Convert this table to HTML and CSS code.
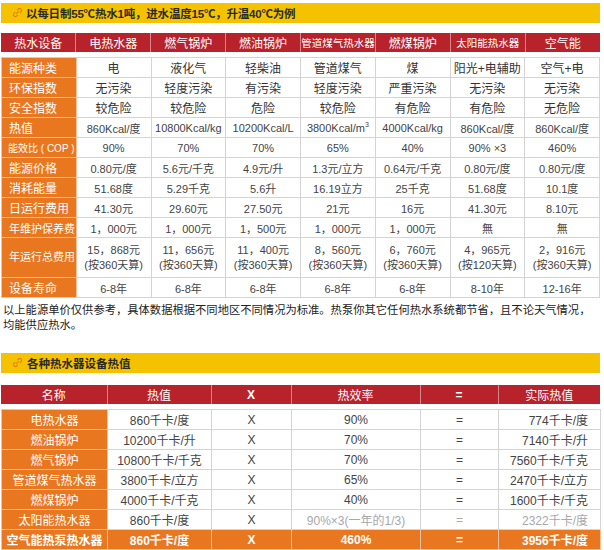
FILE: index.html
```html
<!DOCTYPE html>
<html lang="zh">
<head>
<meta charset="utf-8">
<title>热水设备对比</title>
<link rel="stylesheet" href="styles.css">
</head>
<body>
<div class="page">
  <div class="banner">
    <svg class="link" width="9" height="9" viewBox="0 0 9 9"><path d="M4.2 2.2 L5.6 0.8 Q6.6 -0.2 7.6 0.8 L8.2 1.4 Q9.2 2.4 8.2 3.4 L6.8 4.8 M4.8 6.8 L3.4 8.2 Q2.4 9.2 1.4 8.2 L0.8 7.6 Q-0.2 6.6 0.8 5.6 L2.2 4.2 M3.2 5.8 L5.8 3.2" fill="none" stroke="#e8761e" stroke-width="1.1"/></svg>
    <span>以每日制55℃热水1吨，进水温度15℃，升温40℃为例</span>
  </div>

  <table class="t1 head">
    <tr>
      <th>热水设备</th><th>电热水器</th><th>燃气锅炉</th><th>燃油锅炉</th><th class="narrow">管道煤气热水器</th><th>燃煤锅炉</th><th class="narrow">太阳能热水器</th><th>空气能</th>
    </tr>
  </table>

  <table class="t1 body">
    <tr><td class="lab">能源种类</td><td class="cn">电</td><td class="cn">液化气</td><td class="cn">轻柴油</td><td class="cn">管道煤气</td><td class="cn">煤</td><td class="cn">阳光+电辅助</td><td class="cn">空气+电</td></tr>
    <tr><td class="lab">环保指数</td><td class="cn">无污染</td><td class="cn">轻度污染</td><td class="cn">有污染</td><td class="cn">轻度污染</td><td class="cn">严重污染</td><td class="cn">无污染</td><td class="cn">无污染</td></tr>
    <tr><td class="lab">安全指数</td><td class="cn">较危险</td><td class="cn">较危险</td><td class="cn">危险</td><td class="cn">较危险</td><td class="cn">有危险</td><td class="cn">有危险</td><td class="cn">无危险</td></tr>
    <tr><td class="lab">热值</td><td>860Kcal/度</td><td>10800Kcal/kg</td><td>10200Kcal/L</td><td>3800Kcal/m<sup>3</sup></td><td>4000Kcal/kg</td><td>860Kcal/度</td><td>860Kcal/度</td></tr>
    <tr><td class="lab lab-sm">能效比 ( COP )</td><td>90%</td><td>70%</td><td>70%</td><td>65%</td><td>40%</td><td>90% ×3</td><td>460%</td></tr>
    <tr><td class="lab">能源价格</td><td>0.80元/度</td><td>5.6元/千克</td><td>4.9元/升</td><td>1.3元/立方</td><td>0.64元/千克</td><td>0.80元/度</td><td>0.80元/度</td></tr>
    <tr><td class="lab">消耗能量</td><td>51.68度</td><td>5.29千克</td><td>5.6升</td><td>16.19立方</td><td>25千克</td><td>51.68度</td><td>10.1度</td></tr>
    <tr><td class="lab">日运行费用</td><td>41.30元</td><td>29.60元</td><td>27.50元</td><td>21元</td><td>16元</td><td>41.30元</td><td>8.10元</td></tr>
    <tr><td class="lab lab-6">年维护保养费</td><td>1，000元</td><td>1，000元</td><td>1，500元</td><td>1，000元</td><td>1，000元</td><td>無</td><td>無</td></tr>
    <tr class="tall"><td class="lab lab-6">年运行总费用</td><td>15，868元<br>(按360天算)</td><td>11，656元<br>(按360天算)</td><td>11，400元<br>(按360天算)</td><td>8，560元<br>(按360天算)</td><td>6，760元<br>(按360天算)</td><td>4，965元<br>(按120天算)</td><td>2，916元<br>(按360天算)</td></tr>
    <tr><td class="lab">设备寿命</td><td>6-8年</td><td>6-8年</td><td>6-8年</td><td>6-8年</td><td>6-8年</td><td>8-10年</td><td>12-16年</td></tr>
  </table>

  <p class="note">以上能源单价仅供参考，具体数据根据不同地区不同情况为标准。热泵你其它任何热水系统都节省，且不论天气情况，均能供应热水。</p>

  <div class="banner banner2">
    <svg class="link" width="9" height="9" viewBox="0 0 9 9"><path d="M4.2 2.2 L5.6 0.8 Q6.6 -0.2 7.6 0.8 L8.2 1.4 Q9.2 2.4 8.2 3.4 L6.8 4.8 M4.8 6.8 L3.4 8.2 Q2.4 9.2 1.4 8.2 L0.8 7.6 Q-0.2 6.6 0.8 5.6 L2.2 4.2 M3.2 5.8 L5.8 3.2" fill="none" stroke="#e8761e" stroke-width="1.1"/></svg>
    <span>各种热水器设备热值</span>
  </div>

  <table class="t2 head">
    <colgroup><col class="c1"><col class="c2"><col class="c3"><col class="c4"><col class="c5"><col class="c6"></colgroup>
    <tr><th>名称</th><th>热值</th><th class="b">X</th><th>热效率</th><th class="b">=</th><th>实际热值</th></tr>
  </table>

  <table class="t2 body">
    <colgroup><col class="c1"><col class="c2"><col class="c3"><col class="c4"><col class="c5"><col class="c6"></colgroup>
    <tr><td class="lab">电热水器</td><td>860千卡/度</td><td>X</td><td>90%</td><td>=</td><td class="r">774千卡/度</td></tr>
    <tr><td class="lab">燃油锅炉</td><td>10200千卡/升</td><td>X</td><td>70%</td><td>=</td><td class="r">7140千卡/升</td></tr>
    <tr><td class="lab">燃气锅炉</td><td>10800千卡/千克</td><td>X</td><td>70%</td><td>=</td><td class="r">7560千卡/千克</td></tr>
    <tr><td class="lab">管道煤气热水器</td><td>3800千卡/立方</td><td>X</td><td>65%</td><td>=</td><td class="r">2470千卡/立方</td></tr>
    <tr><td class="lab">燃煤锅炉</td><td>4000千卡/千克</td><td>X</td><td>40%</td><td>=</td><td class="r">1600千卡/千克</td></tr>
    <tr><td class="lab">太阳能热水器</td><td>860千卡/度</td><td>X</td><td class="fd">90%×3(一年的1/3)</td><td class="fd">=</td><td class="r fd">2322千卡/度</td></tr>
    <tr class="hl"><td class="lab">空气能热泵热水器</td><td>860千卡/度</td><td>X</td><td>460%</td><td>=</td><td class="r">3956千卡/度</td></tr>
  </table>
</div>
</body>
</html>
```

FILE: styles.css
```css
html, body {
  margin: 0;
  padding: 0;
  background: #ffffff;
}

.page {
  width: 599px;
  margin-left: 1px;
  padding-top: 3px;
  font-family: "Liberation Sans", "Noto Sans CJK SC", sans-serif;
  color: #3a3a3a;
}

.banner {
  height: 20px;
  background: #f5c200;
  display: flex;
  align-items: center;
  padding-left: 12px;
  gap: 4px;
  font-size: 11.5px;
  font-weight: bold;
  color: #2a2a2a;
  letter-spacing: -0.2px;
}

.banner .link {
  flex: none;
  margin-top: -2px;
}

.banner2 {
  margin-top: 20px;
  gap: 5px;
  letter-spacing: 0;
}

table {
  width: 599px;
  border-collapse: collapse;
  table-layout: fixed;
}

th {
  background: #b8232b;
  color: #ffffff;
  font-weight: normal;
  font-size: 12px;
  height: 19px;
  padding: 0;
  border-left: 1px solid #d9868a;
  text-align: center;
}

th:first-child {
  border-left: none;
}

th.narrow {
  font-size: 10.5px;
}

th.b {
  font-weight: bold;
}

.t1.head {
  margin-top: 10px;
}

.t1.body {
  margin-top: 5px;
}

td {
  padding: 0;
  height: 19px;
  border: 1px solid #d4d4d4;
  text-align: center;
  font-size: 11px;
  color: #444444;
  white-space: nowrap;
  overflow: hidden;
}

td.cn {
  font-size: 12px;
  color: #333333;
}

td sup {
  font-size: 7px;
  line-height: 0;
}

td.lab {
  background: #e9771f;
  color: #ffffff;
  text-align: left;
  padding-left: 7px;
  font-size: 12px;
  border-color: #f3c3a0;
}

td.lab-6 {
  font-size: 11px;
}

td.lab-sm {
  font-size: 10px;
  padding-left: 6px;
  white-space: pre;
}

tr.tall td {
  height: 39px;
  line-height: 15px;
}

.note {
  margin: 5px 6px 0 2px;
  font-size: 11.3px;
  line-height: 15px;
  color: #222222;
}

.t2 .c1 { width: 106px; }
.t2 .c2 { width: 104px; }
.t2 .c3 { width: 80px; }
.t2 .c4 { width: 129px; }
.t2 .c5 { width: 78px; }
.t2 .c6 { width: 102px; }

.t2.head {
  margin-top: 12px;
}

.t2.body {
  margin-top: 5px;
}

.t2 td {
  font-size: 12px;
}

.t2 td.lab {
  text-align: center;
  padding-left: 0;
}

.t2 td.r {
  text-align: right;
  padding-right: 12px;
}

.t2 td.fd {
  color: #a8a8a8;
}

.t2 tr.hl td {
  background: #e9771f;
  color: #ffffff;
  font-weight: bold;
  border-color: #f3c3a0;
}
```
